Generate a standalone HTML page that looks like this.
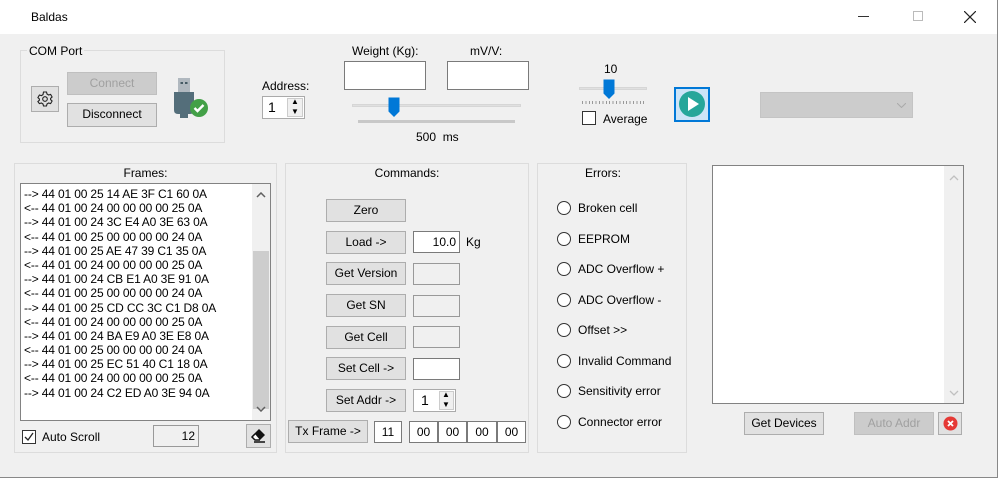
<!DOCTYPE html>
<html><head><meta charset="utf-8"><style>
*{box-sizing:border-box;margin:0;padding:0}
body{width:998px;height:478px;background:#f0f0f0;font-family:"Liberation Sans",sans-serif;font-size:12px;color:#000;position:relative;overflow:hidden}
.a{position:absolute}
.title{left:0;top:0;width:998px;height:34px;background:#fff}
.grp{position:absolute;border:1px solid #dcdcdc}
.btn{position:absolute;background:#e1e1e1;border:1px solid #adadad;text-align:center;line-height:20px}
.dis{background:#cccccc;border-color:#bfbfbf;color:#a0a0a0}
.tb{position:absolute;background:#fff;border:1px solid #7a7a7a}
.tbg{position:absolute;background:#f0f0f0;border:1px solid #7a7a7a}
.rad{position:absolute;width:14px;height:14px;border:1px solid #333;border-radius:50%;background:#fff}
.lbl{position:absolute;white-space:nowrap}
.frames div{height:14.2px;line-height:14.2px;white-space:nowrap;letter-spacing:-0.15px}
.c{text-align:center}
</style></head><body>
<div class="a title"></div>
<div class="lbl" style="left:31px;top:10px">Baldas</div>
<div class="a" style="left:858px;top:16px;width:11px;height:1px;background:#333"></div>
<div class="a" style="left:913px;top:11px;width:10px;height:10px;border:1px solid #bbb"></div>
<svg class="a" style="left:964px;top:11px" width="12" height="12"><path d="M0 0L12 12M12 0L0 12" stroke="#222" stroke-width="1.2"/></svg>
<div class="a" style="left:997px;top:0;width:1px;height:478px;background:#888"></div>
<div class="a" style="left:0;top:477px;width:998px;height:1px;background:#888"></div>

<div class="grp" style="left:20px;top:50px;width:205px;height:93px"></div>
<div class="lbl" style="left:27px;top:44px;background:#f0f0f0;padding:0 2px">COM Port</div>
<div class="btn" style="left:31px;top:86px;width:28px;height:26px"></div>
<svg class="a" style="left:37px;top:91px" width="16" height="16" viewBox="0 0 16 16"><path d="M6.5 1h3l.5 2 1.6 1 2-.6 1.5 2.6-1.5 1.4v1.2l1.5 1.4-1.5 2.6-2-.6-1.6 1-.5 2h-3l-.5-2-1.6-1-2 .6L.9 10.6l1.5-1.4V8L.9 6.6 2.4 4l2 .6 1.6-1z" fill="none" stroke="#222" stroke-width="1.1"/><circle cx="8" cy="8" r="2.3" fill="none" stroke="#222" stroke-width="1.1"/></svg>
<div class="btn dis" style="left:67px;top:72px;width:90px;height:23px">Connect</div>
<div class="btn" style="left:67px;top:103px;width:90px;height:24px">Disconnect</div>
<svg class="a" style="left:168px;top:76px" width="44" height="44" viewBox="0 0 44 44"><rect x="10" y="2" width="12" height="14" fill="#b0b8bf"/><rect x="12.5" y="6" width="2.5" height="2" fill="#455a64"/><rect x="17" y="6" width="2.5" height="2" fill="#455a64"/><path d="M6 16h20v18q0 4-4 4h-12q-4 0-4-4z" fill="#546e7a"/><rect x="12" y="38" width="8" height="4" fill="#546e7a"/><circle cx="31" cy="32" r="9" fill="#43a047"/><path d="M26.5 32l3 3 6-6" stroke="#fff" stroke-width="2.4" fill="none"/></svg>

<div class="lbl" style="left:262px;top:79px">Address:</div>
<div class="tb" style="left:262px;top:96px;width:43px;height:23px;border-color:#aaa"></div>
<div class="lbl" style="left:268px;top:99px;font-size:14px">1</div>
<div class="a" style="left:287px;top:98px;width:16px;height:19px;background:#f0f0f0;border:1px solid #ccc"></div>
<div class="lbl" style="left:291px;top:97px;font-size:8px">▲</div>
<div class="lbl" style="left:291px;top:107px;font-size:8px">▼</div>

<div class="lbl" style="left:352px;top:44px">Weight (Kg):</div>
<div class="lbl" style="left:470px;top:44px">mV/V:</div>
<div class="tb" style="left:344px;top:61px;width:82px;height:29px"></div>
<div class="tb" style="left:447px;top:61px;width:82px;height:29px"></div>
<div class="a" style="left:352px;top:104px;width:169px;height:3px;background:#e0e0e0;border:1px solid #d6d6d6"></div>
<svg class="a" style="left:388px;top:97px" width="13" height="21"><path d="M0.5 0.5h11v14l-5.5 5.5-5.5-5.5z" fill="#0078d7"/></svg>
<div class="a" style="left:358px;top:120px;width:157px;height:3px;background:#c8c8c8"></div>
<div class="lbl" style="left:416px;top:130px">500&nbsp; ms</div>

<div class="lbl" style="left:604px;top:62px">10</div>
<div class="a" style="left:579px;top:87px;width:68px;height:3px;background:#e0e0e0;border:1px solid #d6d6d6"></div>
<svg class="a" style="left:603px;top:79px" width="13" height="21"><path d="M0.5 0.5h11v14l-5.5 5.5-5.5-5.5z" fill="#0078d7"/></svg>
<div class="a" style="left:582px;top:101px;width:62px;height:3px;background:repeating-linear-gradient(90deg,#999 0 1px,transparent 1px 3.4px)"></div>
<div class="tb" style="left:582px;top:111px;width:14px;height:14px;border-color:#333"></div>
<div class="lbl" style="left:603px;top:112px">Average</div>

<div class="a" style="left:674px;top:87px;width:36px;height:35px;border:2px solid #0078d7;background:#cde4f7"></div>
<svg class="a" style="left:677px;top:89px" width="30" height="30"><circle cx="15" cy="15" r="13" fill="#26a69a"/><path d="M11 8l11 7-11 7z" fill="#fff"/></svg>

<div class="a" style="left:760px;top:92px;width:153px;height:26px;background:#cccccc;border:1px solid #c4c4c4"></div>
<svg class="a" style="left:897px;top:103px" width="9" height="5"><path d="M0 0l4.5 4.5L9 0" stroke="#aaa" fill="none"/></svg>

<div class="grp" style="left:14px;top:163px;width:263px;height:290px"></div>
<div class="lbl c" style="left:14px;top:166px;width:263px">Frames:</div>
<div class="tb frames" style="left:20px;top:183px;width:251px;height:238px;border-color:#828282;padding:3px 0 0 3px">
<div>--&gt; 44 01 00 25 14 AE 3F C1 60 0A</div>
<div>&lt;-- 44 01 00 24 00 00 00 00 25 0A</div>
<div>--&gt; 44 01 00 24 3C E4 A0 3E 63 0A</div>
<div>&lt;-- 44 01 00 25 00 00 00 00 24 0A</div>
<div>--&gt; 44 01 00 25 AE 47 39 C1 35 0A</div>
<div>&lt;-- 44 01 00 24 00 00 00 00 25 0A</div>
<div>--&gt; 44 01 00 24 CB E1 A0 3E 91 0A</div>
<div>&lt;-- 44 01 00 25 00 00 00 00 24 0A</div>
<div>--&gt; 44 01 00 25 CD CC 3C C1 D8 0A</div>
<div>&lt;-- 44 01 00 24 00 00 00 00 25 0A</div>
<div>--&gt; 44 01 00 24 BA E9 A0 3E E8 0A</div>
<div>&lt;-- 44 01 00 25 00 00 00 00 24 0A</div>
<div>--&gt; 44 01 00 25 EC 51 40 C1 18 0A</div>
<div>&lt;-- 44 01 00 24 00 00 00 00 25 0A</div>
<div>--&gt; 44 01 00 24 C2 ED A0 3E 94 0A</div>
</div>
<div class="a" style="left:252px;top:184px;width:18px;height:236px;background:#f0f0f0"></div>
<div class="a" style="left:253px;top:251px;width:16px;height:158px;background:#cdcdcd"></div>
<svg class="a" style="left:256px;top:192px" width="10" height="6"><path d="M1 5l4-4 4 4" stroke="#606060" stroke-width="1.5" fill="none"/></svg>
<svg class="a" style="left:256px;top:406px" width="10" height="6"><path d="M1 1l4 4 4-4" stroke="#606060" stroke-width="1.5" fill="none"/></svg>
<div class="tb" style="left:22px;top:430px;width:14px;height:14px;border-color:#333"></div>
<svg class="a" style="left:24px;top:432px" width="10" height="10"><path d="M1 5l3 3 5-7" stroke="#222" stroke-width="1.3" fill="none"/></svg>
<div class="lbl" style="left:42px;top:430px">Auto Scroll</div>
<div class="tbg" style="left:153px;top:425px;width:46px;height:22px;border-color:#999;text-align:right;padding:3px 3px 0 0">12</div>
<div class="btn" style="left:246px;top:424px;width:25px;height:24px"></div>
<svg class="a" style="left:250px;top:428px" width="17" height="16" viewBox="0 0 17 16"><path d="M9 1l6 6-5 5H6L2 8z" fill="#111"/><path d="M5 6l-3 3 3 3h5" stroke="#111" stroke-width="1.5" fill="#fff"/><path d="M4 14h11" stroke="#111" stroke-width="1.5"/></svg>

<div class="grp" style="left:285px;top:163px;width:244px;height:290px"></div>
<div class="lbl c" style="left:285px;top:166px;width:244px">Commands:</div>
<div class="btn" style="left:326px;top:199px;width:80px;height:23px">Zero</div>
<div class="btn" style="left:326px;top:231px;width:80px;height:23px">Load -&gt;</div>
<div class="btn" style="left:326px;top:262px;width:80px;height:23px">Get Version</div>
<div class="btn" style="left:326px;top:294px;width:80px;height:23px">Get SN</div>
<div class="btn" style="left:326px;top:326px;width:80px;height:23px">Get Cell</div>
<div class="btn" style="left:326px;top:357px;width:80px;height:23px">Set Cell -&gt;</div>
<div class="btn" style="left:326px;top:389px;width:80px;height:23px">Set Addr -&gt;</div>
<div class="tb" style="left:413px;top:231px;width:47px;height:22px;text-align:right;padding:3px 3px 0 0">10.0</div>
<div class="lbl" style="left:466px;top:235px">Kg</div>
<div class="tbg" style="left:413px;top:263px;width:47px;height:22px;border-color:#999"></div>
<div class="tbg" style="left:413px;top:295px;width:47px;height:22px;border-color:#999"></div>
<div class="tbg" style="left:413px;top:326px;width:47px;height:22px;border-color:#999"></div>
<div class="tb" style="left:413px;top:358px;width:47px;height:22px"></div>
<div class="tb" style="left:413px;top:389px;width:43px;height:23px;border-color:#aaa"></div>
<div class="lbl" style="left:421px;top:392px;font-size:14px">1</div>
<div class="a" style="left:439px;top:391px;width:15px;height:19px;background:#f0f0f0;border:1px solid #ccc"></div>
<div class="lbl" style="left:442px;top:390px;font-size:8px">▲</div>
<div class="lbl" style="left:442px;top:400px;font-size:8px">▼</div>
<div class="btn" style="left:288px;top:420px;width:80px;height:23px">Tx Frame -&gt;</div>
<div class="tb c" style="left:374px;top:421px;width:28px;height:22px;padding-top:3px">11</div>
<div class="tb c" style="left:409px;top:421px;width:29px;height:22px;padding-top:3px">00</div>
<div class="tb c" style="left:438px;top:421px;width:29px;height:22px;padding-top:3px">00</div>
<div class="tb c" style="left:467px;top:421px;width:30px;height:22px;padding-top:3px">00</div>
<div class="tb c" style="left:497px;top:421px;width:29px;height:22px;padding-top:3px">00</div>

<div class="grp" style="left:537px;top:163px;width:150px;height:290px"></div>
<div class="lbl c" style="left:537px;top:166px;width:132px">Errors:</div>
<div class="rad" style="left:557px;top:201px"></div><div class="lbl" style="left:578px;top:201px">Broken cell</div>
<div class="rad" style="left:557px;top:232px"></div><div class="lbl" style="left:578px;top:232px">EEPROM</div>
<div class="rad" style="left:557px;top:262px"></div><div class="lbl" style="left:578px;top:262px">ADC Overflow +</div>
<div class="rad" style="left:557px;top:293px"></div><div class="lbl" style="left:578px;top:293px">ADC Overflow -</div>
<div class="rad" style="left:557px;top:323px"></div><div class="lbl" style="left:578px;top:323px">Offset &gt;&gt;</div>
<div class="rad" style="left:557px;top:354px"></div><div class="lbl" style="left:578px;top:354px">Invalid Command</div>
<div class="rad" style="left:557px;top:384px"></div><div class="lbl" style="left:578px;top:384px">Sensitivity error</div>
<div class="rad" style="left:557px;top:415px"></div><div class="lbl" style="left:578px;top:415px">Connector error</div>

<div class="tb" style="left:712px;top:165px;width:252px;height:239px;border-color:#828282"></div>
<div class="a" style="left:944px;top:166px;width:19px;height:237px;background:#f0f0f0"></div>
<svg class="a" style="left:949px;top:175px" width="10" height="6"><path d="M1 5l4-4 4 4" stroke="#c0c0c0" stroke-width="1.3" fill="none"/></svg>
<svg class="a" style="left:949px;top:390px" width="10" height="6"><path d="M1 1l4 4 4-4" stroke="#c0c0c0" stroke-width="1.3" fill="none"/></svg>
<div class="btn" style="left:744px;top:412px;width:80px;height:23px">Get Devices</div>
<div class="btn dis" style="left:854px;top:412px;width:80px;height:23px">Auto Addr</div>
<div class="btn" style="left:938px;top:412px;width:24px;height:23px"></div>
<svg class="a" style="left:943px;top:416px" width="15" height="15"><circle cx="7.5" cy="7.5" r="7" fill="#e53935"/><path d="M5 5l5 5M10 5l-5 5" stroke="#fff" stroke-width="1.8"/></svg>
</body></html>
